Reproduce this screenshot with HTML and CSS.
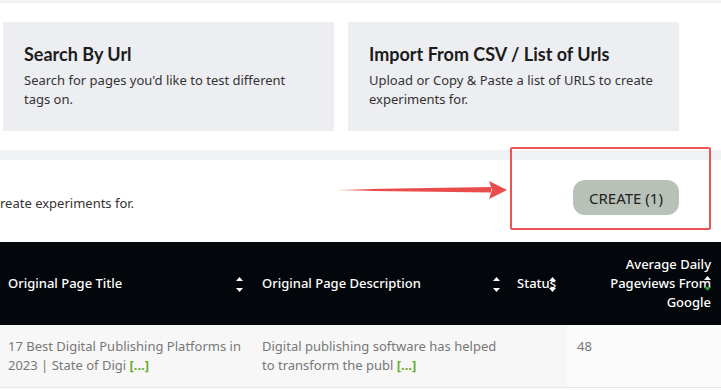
FILE: index.html
```html
<!DOCTYPE html>
<html lang="en">
<head>
    <meta charset="UTF-8">
    <meta name="viewport" content="width=device-width, initial-scale=1.0">
    <title>Create Experiments</title>
    <link rel="stylesheet" href="styles.css">
</head>
<body>

    <div class="top-strip"></div>

    <div class="options">
        <div class="option-card">
            <h3>Search By Url</h3>
            <p>Search for pages you'd like to test different tags on.</p>
        </div>
        <div class="option-card">
            <h3>Import From CSV / List of Urls</h3>
            <p>Upload or Copy &amp; Paste a list of URLS to create experiments for.</p>
        </div>
    </div>

    <div class="divider"></div>

    <div class="create-bar">
        <span class="hint">reate experiments for.</span>
        <button class="create-btn">CREATE (1)</button>

        <!-- annotation overlay -->
        <svg class="arrow" width="175" height="20" viewBox="0 0 175 20">
            <defs>
                <linearGradient id="fade" x1="0" x2="1" y1="0" y2="0">
                    <stop offset="0" stop-color="#ea4c4c" stop-opacity="0"/>
                    <stop offset="0.25" stop-color="#ea4c4c" stop-opacity="1"/>
                    <stop offset="1" stop-color="#ea4c4c"/>
                </linearGradient>
            </defs>
            <polygon points="0,9.5 156,7 156,12.5 0,10.5" fill="url(#fade)"/>
            <polygon points="154,1 172,10 154,19 157,10" fill="#ea4c4c"/>
        </svg>
        <div class="highlight-box"></div>
    </div>

    <table class="pages">
        <colgroup>
            <col class="w-title">
            <col class="w-desc">
            <col class="w-status">
            <col class="w-views">
        </colgroup>
        <thead>
            <tr>
                <th class="col-title">Original Page Title
                    <svg class="sort" width="7" height="16" viewBox="0 0 7 16"><polygon points="3.5,0 7,4 0,4" fill="#fff"/><polygon points="0,11 7,11 3.5,15" fill="#fff"/></svg>
                </th>
                <th class="col-desc">Original Page Description
                    <svg class="sort" width="7" height="16" viewBox="0 0 7 16"><polygon points="3.5,0 7,4 0,4" fill="#fff"/><polygon points="0,11 7,11 3.5,15" fill="#fff"/></svg>
                </th>
                <th class="col-status">Status
                    <svg class="sort" width="7" height="16" viewBox="0 0 7 16"><polygon points="3.5,0 7,4 0,4" fill="#fff"/><polygon points="0,11 7,11 3.5,15" fill="#fff"/></svg>
                </th>
                <th class="col-views">Average Daily Pageviews From Google
                    <svg class="sort" width="7" height="16" viewBox="0 0 7 16"><polygon points="3.5,0 7,4 0,4" fill="#fff"/><polygon points="0,11 7,11 3.5,15" fill="#2e9e3a"/></svg>
                </th>
            </tr>
        </thead>
        <tbody>
            <tr>
                <td>17 Best Digital Publishing Platforms in 2023 | State of Digi <b class="more">[...]</b></td>
                <td>Digital publishing software has helped to transform the publ <b class="more">[...]</b></td>
                <td></td>
                <td class="sorted">48</td>
            </tr>
        </tbody>
    </table>

</body>
</html>
```

FILE: styles.css
```css
body { margin: 0; font-family: "Noto Sans", Arial, sans-serif; font-size: 13px; color: #333; background: white; width: 721px; overflow: hidden; }
.top-strip { height: 3px; background: #f1f2f5; }
.options { display: flex; gap: 14px; padding: 19px 0 19px 3px; }
.option-card { width: 331px; height: 109px; box-sizing: border-box; background: #edeef2; padding: 20px 21px 0 21px; }
.option-card h3 { margin: 0 0 5px; font-family: Lato, "DejaVu Sans", sans-serif; font-weight: 700; font-size: 18px; line-height: 24px; color: #1b1b1b; }
.option-card p { margin: 0; line-height: 19px; color: #333; }
.divider { height: 10px; background: #f1f2f5; }
.create-bar { position: relative; height: 82px; display: flex; align-items: flex-start; justify-content: space-between; }
.hint { margin-top: 34px; line-height: 19px; }
.create-btn { margin: 20px 42px 0 0; width: 106px; height: 35px; border: none; border-radius: 12px; background: #b8c1b8; font-family: "Noto Sans", Arial, sans-serif; font-size: 15px; color: #222; padding: 0; }
.arrow { position: absolute; left: 335px; top: 20px; }
.highlight-box { position: absolute; left: 510px; top: -13px; width: 197px; height: 79px; border: 2px solid #e95555; border-radius: 2px; }
.pages { border-collapse: collapse; table-layout: fixed; width: 721px; }
.w-title { width: 252px; }
.w-desc { width: 255px; }
.w-status { width: 60px; }
.w-views { width: 154px; }
.pages th { position: relative; box-sizing: border-box; background: #03070b; color: white; font-weight: 500; text-align: left; line-height: 19px; padding: 13px 10px; height: 83px; }
.pages th.col-title { padding-left: 8px; }
.pages th.col-views { text-align: right; padding-right: 10px; }
.sort { position: absolute; right: 10px; top: 35px; }
.col-title .sort { right: 9px; }
.col-desc .sort { right: 7px; }
.col-status .sort { right: 11px; }
.col-views .sort { top: 34px; }
.pages td { background: #f7f7f7; color: #777; line-height: 19px; padding: 12px 10px; vertical-align: top; border-bottom: 1px solid #e6e6e6; }
.pages td:first-child { padding-left: 8px; }
.pages td.sorted { background: #fbfbfb; }
.more { color: #6aaa2a; }
```
